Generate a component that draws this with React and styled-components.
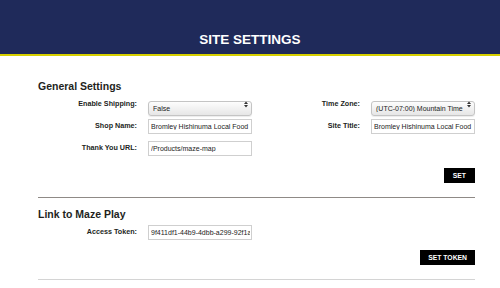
import React from 'react';
import styled, { createGlobalStyle } from 'styled-components';

const GlobalStyle = createGlobalStyle`
  html, body {
    margin: 0;
    padding: 0;
    background: #fff;
    font-family: "Liberation Sans", Arial, sans-serif;
    color: #231f1c;
  }
`

const Header = styled.header`
  height: 56px;
  background-color: #1f2a5a;
  border-bottom: 2px solid #d6cf00;
  display: flex;
  align-items: flex-end;
  justify-content: center;
  padding-bottom: 6px;
  box-sizing: border-box;
`

const Title = styled.h1`
  margin: 0;
  color: #fff;
  font-size: 13.5px;
  font-weight: bold;
  line-height: 16px;
`

const Main = styled.main`
  padding: 0 25px 0 38px;
`

const Section = styled.section`
  padding-top: ${p => p.$top}px;
  padding-bottom: ${p => p.$bottom}px;
  border-bottom: 1px solid ${p => p.$rule};
`

const Heading = styled.h2`
  margin: 0 0 5px;
  font-size: 10.5px;
  line-height: 12px;
  font-weight: bold;
`

const FormGrid = styled.div`
  display: grid;
  grid-template-columns: 1fr 1fr;
  column-gap: 9px;
  row-gap: 7px;
`

const Field = styled.div`
  display: grid;
  grid-template-columns: 99px 1fr;
  column-gap: 11px;
  align-items: start;
`

const Label = styled.label`
  text-align: right;
  font-size: 7.2px;
  font-weight: bold;
  line-height: 9px;
  padding-top: 2px;
`

const Input = styled.input`
  box-sizing: border-box;
  width: 104px;
  height: 15px;
  margin: 0;
  padding: 0 1px 0 2px;
  border: 1px solid #cfcfcf;
  background: #fff;
  font-family: inherit;
  font-size: 7px;
  color: #222;
  outline: none;
`

const SelectBox = styled.div`
  position: relative;
  width: 104px;
  height: 15px;
`

const Select = styled.select`
  appearance: none;
  box-sizing: border-box;
  width: 100%;
  height: 100%;
  margin: 0;
  padding: 0 9px 0 4px;
  border: 1px solid #c4c4c4;
  border-radius: 3px;
  background: linear-gradient(#fdfdfd, #e6e6e6);
  font-family: inherit;
  font-size: 7px;
  color: #222;
  box-shadow: 0 1px 1px rgba(0, 0, 0, 0.08);
`

const Arrows = styled.svg`
  position: absolute;
  right: 4px;
  top: 4px;
  pointer-events: none;
`

const ButtonRow = styled.div`
  display: flex;
  justify-content: flex-end;
  margin-top: ${p => p.$top}px;
`

const Button = styled.button`
  height: 15px;
  padding: 0 ${p => p.$pad}px;
  border: none;
  background: #000;
  color: #fff;
  font-family: inherit;
  font-size: 6.8px;
  font-weight: bold;
`

const Dropdown = ({ value, options }) => (
  <SelectBox>
    <Select defaultValue={value}>
      {options.map(o => <option key={o}>{o}</option>)}
    </Select>
    <Arrows width="4" height="7" viewBox="0 0 4 7">
      <path d="M0 3 L2 0.5 L4 3 Z M0 4 L2 6.5 L4 4 Z" fill="#333" />
    </Arrows>
  </SelectBox>
)

export default function App() {
  return (
    <>
      <GlobalStyle />
      <Header>
        <Title>SITE SETTINGS</Title>
      </Header>
      <Main>
        <Section $top={24} $bottom={14} $rule="#8f8a86">
          <Heading>General Settings</Heading>
          <FormGrid>
            <Field>
              <Label>Enable Shipping:</Label>
              <Dropdown value="False" options={["False", "True"]} />
            </Field>
            <Field>
              <Label>Time Zone:</Label>
              <Dropdown value="(UTC-07:00) Mountain Time" options={["(UTC-07:00) Mountain Time"]} />
            </Field>
            <Field>
              <Label>Shop Name:</Label>
              <Input defaultValue="Bromley Hishinuma Local Food" />
            </Field>
            <Field>
              <Label>Site Title:</Label>
              <Input defaultValue="Bromley Hishinuma Local Food" />
            </Field>
            <Field>
              <Label>Thank You URL:</Label>
              <Input defaultValue="/Products/maze-map" />
            </Field>
          </FormGrid>
          <ButtonRow $top={12}>
            <Button $pad={9}>SET</Button>
          </ButtonRow>
        </Section>
        <Section $top={10} $bottom={14} $rule="#d4d4d4">
          <Heading>Link to Maze Play</Heading>
          <FormGrid>
            <Field>
              <Label>Access Token:</Label>
              <Input defaultValue="9f411df1-44b9-4dbb-a299-92f1a3c07e55" />
            </Field>
          </FormGrid>
          <ButtonRow $top={10}>
            <Button $pad={8}>SET TOKEN</Button>
          </ButtonRow>
        </Section>
      </Main>
    </>
  );
}
